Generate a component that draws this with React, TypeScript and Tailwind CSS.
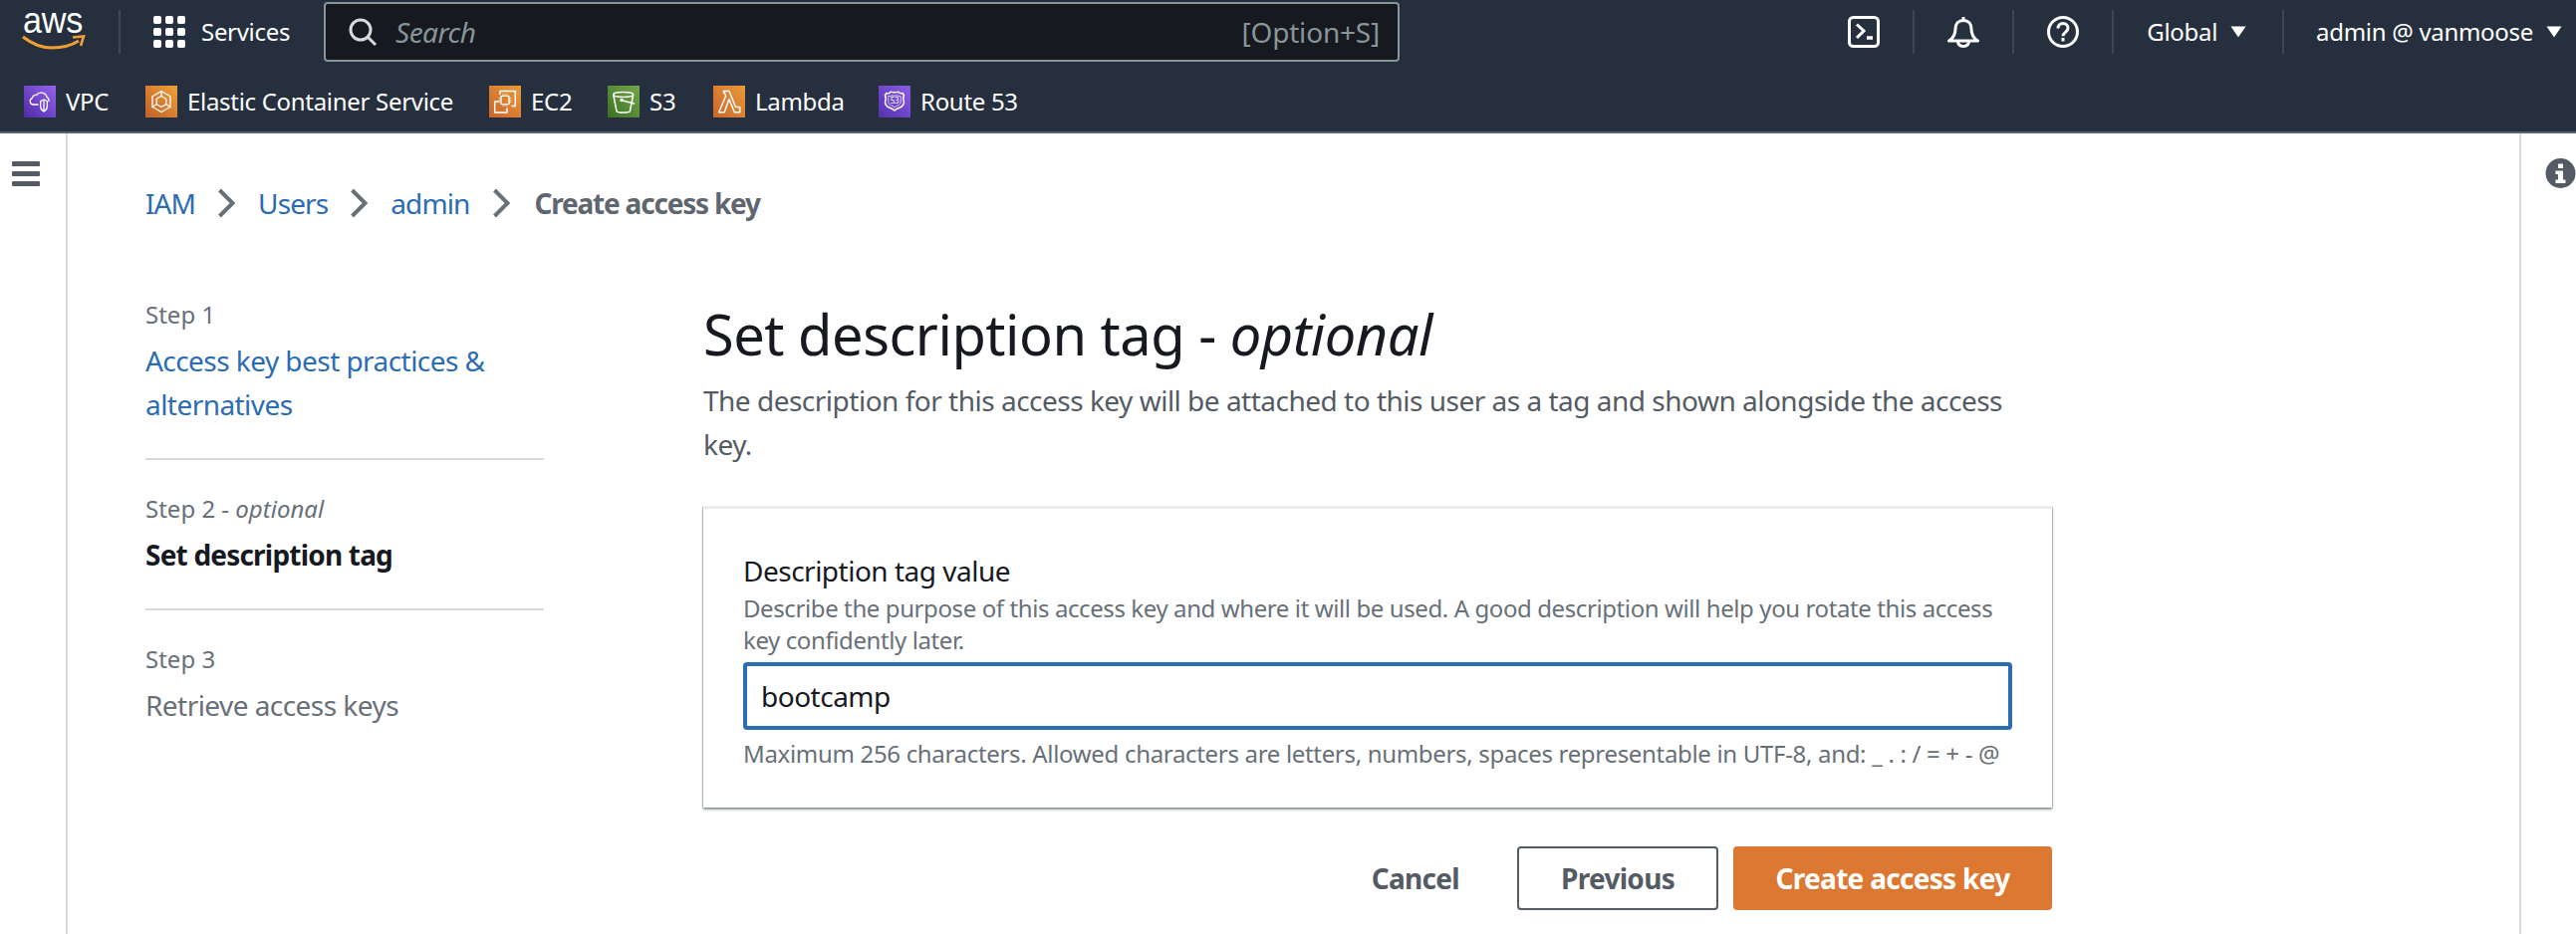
import React from "react";

const F = "[font-family:'Noto_Sans',sans-serif]";

function Tile({ from, to, id, children }: { from: string; to: string; id: string; children: React.ReactNode }) {
  return (
    <svg width="32" height="32" viewBox="0 0 32 32" className="shrink-0">
      <defs>
        <linearGradient id={id} x1="0" y1="1" x2="1" y2="0">
          <stop offset="0" stopColor={from} />
          <stop offset="1" stopColor={to} />
        </linearGradient>
      </defs>
      <rect width="32" height="32" fill={`url(#${id})`} />
      <g fill="none" stroke="#fff" strokeWidth="1.3" strokeLinejoin="round" strokeLinecap="round">{children}</g>
    </svg>
  );
}

const VpcIcon = () => (
  <Tile id="g1" from="#4f2ba6" to="#9563ee">
    <path d="M14 19H9.500a3.400 3.400 0 0 1-1-6.600 3.300 3.300 0 0 1 3.900-2.900A6 6 0 0 1 23 11.500a4 4 0 0 1 2 4" />
    <path d="M16.700 15.500l3.300-1.500 3.300 1.500V21c0 2.500-1.500 4-3.300 5-1.800-1-3.300-2.500-3.300-5z" />
    <path d="M20 14.500V25.500" />
  </Tile>
);
const EcsIcon = () => (
  <Tile id="g2" from="#c2602a" to="#eda038">
    <path d="M16 5.500l9 5.200v10.600l-9 5.200-9-5.200V10.700z" />
    <path d="M16 10.500l4.800 2.700v5.600L16 21.500l-4.800-2.700v-5.600z" />
    <path d="M16 5.500v5M20.800 18.800l4.200 2.500M7 21.300l4.200-2.500" />
  </Tile>
);
const Ec2Icon = () => (
  <Tile id="g3" from="#c8652c" to="#eb9a38">
    <rect x="12" y="10.500" width="8" height="8" strokeWidth="1.200" />
    <path d="M14 8.500v2M16 8.500v2M18 8.500v2M14 18.500v2M16 18.500v2M18 18.500v2M10 12.500h2M10 14.500h2M10 16.500h2M20 12.500h2M20 14.500h2M20 16.500h2" strokeWidth=".8" />
    <path d="M11 8.500V5.500H26.300V20.500H23" strokeWidth="1.500" />
    <path d="M9.500 16H5.700V27H18V23" strokeWidth="1.500" />
  </Tile>
);
const S3Icon = () => (
  <Tile id="g4" from="#3c7022" to="#72a84a">
    <path d="M5.700 9c0-1.400 4.500-2.400 10-2.400s10 1 10 2.400-4.500 2.400-10 2.400-10-1-10-2.400z" strokeWidth="1.500" />
    <path d="M5.700 9l3.300 16.500c.3 1 3 1.500 6.700 1.500s6.400-.5 6.700-1.500l3.300-16.500" strokeWidth="1.500" />
    <circle cx="14" cy="14.500" r="1" />
    <path d="M15 15l11.500 3" strokeWidth="1.500" />
  </Tile>
);
const LambdaIcon = () => (
  <Tile id="g5" from="#c8652c" to="#eb9a38">
    <path d="M10.500 5.500h5.500l6.500 16h4.200v5.200h-5.300l-5.500-13-4.700 13H5.700l7-16.500-1.300-3h-.9z" strokeWidth="1.500" />
  </Tile>
);
const Route53Icon = () => (
  <Tile id="g6" from="#5430aa" to="#8c5de6">
    <path d="M8 7.500c2 .8 3.200.3 4.300-1.300 1.600.8 5.800.8 7.400 0 1.100 1.600 2.300 2.100 4.300 1.300l1.600 2.200c-1.200 1.600-1.200 3-.4 5 1 2.800-.4 6.600-5 7.800-1.600.5-3.100 1.400-4.200 2.500-1.100-1.100-2.600-2-4.200-2.500-4.600-1.200-6-5-5-7.800.8-2 .8-3.400-.4-5z" strokeWidth="1.500" />
    <path d="M10 10.500c1.500.3 2.300 0 3-.8 1.500.5 4.500.5 6 0 .7.8 1.500 1.100 3 .8.600 1.500.4 3 .2 4.500.5 2.500-.8 4.500-3.700 5.300-1 .3-1.800.8-2.500 1.300-.7-.5-1.500-1-2.500-1.300-2.900-.8-4.200-2.800-3.700-5.300-.2-1.500-.4-3 .2-4.500z" strokeWidth=".7" />
    <text x="16" y="18" textAnchor="middle" fontSize="8" fill="#fff" stroke="none" fontFamily="'Noto Sans',sans-serif">53</text>
  </Tile>
);

const shortcuts = [
  { name: "VPC", icon: <VpcIcon />, w: "w-[122px]" },
  { name: "Elastic Container Service", icon: <EcsIcon />, w: "w-[345px]" },
  { name: "EC2", icon: <Ec2Icon />, w: "w-[119px]" },
  { name: "S3", icon: <S3Icon />, w: "w-[106px]" },
  { name: "Lambda", icon: <LambdaIcon />, w: "w-[166px]" },
  { name: "Route 53", icon: <Route53Icon />, w: "w-[140px]" },
];

const Divider = () => <div className="w-[2px] h-[44px] bg-[#3c4654] shrink-0" />;

const Caret = () => (
  <svg width="16" height="12" viewBox="0 0 16 12" className="block shrink-0">
    <path d="M0.500 0.500h15L8 11.500z" fill="#fff" />
  </svg>
);

const Chevron = () => (
  <svg width="19" height="30" viewBox="0 0 19 30" className="block shrink-0">
    <path d="M2.500 2l13 13-13 13" fill="none" stroke="#687078" strokeWidth="4" />
  </svg>
);

function Header() {
  return (
    <header className="bg-[#252f3e] border-b-2 border-[#596370] h-[134px] flex flex-col text-white text-[24px] tracking-[-0.3px]">
      <div className="h-[64px] flex items-center">
        <div className="w-[119px] pl-[22px] shrink-0">
          <svg width="63" height="64" viewBox="0 0 63 64" className="block overflow-visible">
            <text x="1" y="33" fontSize="36" fill="#fff" fontFamily="'Liberation Sans',sans-serif" textLength="60" lengthAdjust="spacingAndGlyphs">aws</text>
            <path d="M1 37c9 7 19 11 29 11 11 0 20-2.500 27-7" fill="none" stroke="#f0a033" strokeWidth="3" />
            <path d="M51 37.500l11-1-3 9.500" fill="none" stroke="#f0a033" strokeWidth="2.600" />
          </svg>
        </div>
        <Divider />
        <svg width="32" height="32" viewBox="0 0 32 32" fill="#fff" className="ml-[33px] shrink-0">
          {[0, 12, 24].map((y) =>
            [0, 12, 24].map((x) => <rect key={`${x}-${y}`} x={x} y={y} width="8" height="8" rx="2" />)
          )}
        </svg>
        <span className="ml-[16px] w-[123px] shrink-0">Services</span>
        <div className="w-[1080px] h-[60px] bg-[#16191f] border-2 border-[#879596] rounded-[4px] flex items-center pl-[22px] pr-[18px] shrink-0 text-[28px] tracking-[-0.5px]">
          <svg width="30" height="30" viewBox="0 0 30 30" className="shrink-0" fill="none" stroke="#d5dbdb" strokeWidth="3">
            <circle cx="13" cy="13" r="10" />
            <path d="M20 20l8 8" />
          </svg>
          <span className="ml-[18px] italic text-[#879596] grow">Search</span>
          <span className="text-[#879596] tracking-[-0.2px]">[Option+S]</span>
        </div>
        <div className="ml-auto flex items-center">
          <svg width="32" height="32" viewBox="0 0 32 32" fill="none" stroke="#fff" strokeWidth="3" className="mr-[33px] shrink-0">
            <rect x="1.500" y="1.500" width="29" height="29" rx="4" />
            <path d="M9 8.500l7 6.500-7 7" />
            <path d="M19 22h6" strokeWidth="3.500" />
          </svg>
          <Divider />
          <svg width="32" height="32" viewBox="0 0 32 32" fill="none" stroke="#fff" strokeWidth="3" className="mx-[33px] shrink-0">
            <path d="M16 1v3" />
            <path d="M1.500 25c5-3 6.500-7 6.500-12 0-5 3-8.500 8-8.500s8 3.500 8 8.500c0 5 1.500 9 6.500 12z" strokeLinejoin="round" />
            <path d="M10.500 25c0 4 2 5.500 5.500 5.500s5.500-1.500 5.500-5.500" />
          </svg>
          <Divider />
          <svg width="32" height="32" viewBox="0 0 32 32" fill="none" stroke="#fff" strokeWidth="3" className="mx-[33px] shrink-0">
            <circle cx="16" cy="16" r="14.500" />
            <path d="M11 12.500c0-3 2.200-5 5-5s5 2 5 4.800c0 4-5 4-5 8" />
            <path d="M16 22v3.500" />
          </svg>
          <Divider />
          <span className="ml-[33px]">Global</span>
          <span className="ml-[13px] mr-[36px]"><Caret /></span>
          <Divider />
          <span className="ml-[32px]">admin @ vanmoose</span>
          <span className="ml-[13px] mr-[14px]"><Caret /></span>
        </div>
      </div>
      <div className="flex items-center h-[24px] mt-[26px] pl-[24px]">
        {shortcuts.map((s) => (
          <div key={s.name} className={`flex items-center gap-[10px] shrink-0 ${s.w}`}>
            {s.icon}
            <span className="whitespace-nowrap">{s.name}</span>
          </div>
        ))}
      </div>
    </header>
  );
}

function Step({ label, children }: { label: React.ReactNode; children: React.ReactNode }) {
  return (
    <div>
      <div className="text-[24px] leading-[34px] text-[#687078]">{label}</div>
      <div className="mt-[7px] text-[28px] leading-[44px] tracking-[-0.55px]">{children}</div>
    </div>
  );
}

export default function App() {
  return (
    <div className={`${F} w-[2586px] h-[938px] overflow-hidden bg-white text-[#16191f]`}>
      <Header />
      <div className="flex h-[804px]">
        <aside className="w-[68px] shrink-0 border-r-2 border-[#d5dbdb] pl-[12px] pt-[28px]">
          <div className="w-[28px] flex flex-col gap-[5px]">
            <div className="h-[5px] bg-[#545b64] rounded-[1px]" />
            <div className="h-[5px] bg-[#545b64] rounded-[1px]" />
            <div className="h-[5px] bg-[#545b64] rounded-[1px]" />
          </div>
        </aside>
        <main className="grow pl-[78px]">
          <nav className="flex items-center h-[44px] mt-[48px] text-[28px] text-[#2b6cb3] tracking-[-0.9px]">
            <span>IAM</span>
            <span className="mx-[22px]"><Chevron /></span>
            <span>Users</span>
            <span className="mx-[22px]"><Chevron /></span>
            <span>admin</span>
            <span className="mx-[23px]"><Chevron /></span>
            <span className="font-bold text-[#5f6670] tracking-[-1.2px]">Create access key</span>
          </nav>
          <div className="flex mt-[73px]">
            <div className="w-[400px] shrink-0">
              <Step label="Step 1">
                <span className="text-[#2b6cb3]">Access key best practices &amp; alternatives</span>
              </Step>
              <div className="h-[2px] bg-[#d5dbdb] my-[32px]" />
              <Step label={<>Step 2 - <i>optional</i></>}>
                <b className="tracking-[-0.8px]">Set description tag</b>
              </Step>
              <div className="h-[2px] bg-[#d5dbdb] my-[32px]" />
              <Step label="Step 3">
                <span className="text-[#687078]">Retrieve access keys</span>
              </Step>
            </div>
            <div className="ml-[160px] w-[1354px] shrink-0">
              <h1 className="text-[56px] leading-[72px] tracking-[-0.5px]">
                Set description tag - <i>optional</i>
              </h1>
              <p className="text-[28px] leading-[44px] text-[#545b64] mt-[9px] tracking-[-0.5px] max-w-[1320px]">
                The description for this access key will be attached to this user as a tag and shown alongside the access key.
              </p>
              <section className="mt-[41px] bg-white border-t-2 border-[#eaeded] shadow-[0_2px_2px_rgba(0,28,36,0.45),1px_0_1px_rgba(0,28,36,0.2),-1px_0_1px_rgba(0,28,36,0.2)] h-[302px] px-[40px] pt-[44px]">
                <div className="text-[28px] leading-[36px] tracking-[-0.5px]">Description tag value</div>
                <div className="text-[24px] leading-[32px] text-[#687078] mt-[4px] tracking-[-0.4px]">
                  Describe the purpose of this access key and where it will be used. A good description will help you rotate this access key confidently later.
                </div>
                <div className="h-[68px] mt-[6px] border-4 border-[#2b6cb3] rounded-[4px] flex items-center pl-[14px] text-[28px] tracking-[-0.5px]">
                  bootcamp
                </div>
                <div className="text-[24px] leading-[32px] text-[#687078] mt-[8px] tracking-[-0.32px] whitespace-nowrap">
                  Maximum 256 characters. Allowed characters are letters, numbers, spaces representable in UTF-8, and: _ . : / = + - @
                </div>
              </section>
              <div className="flex items-center justify-end mt-[39px] text-[28px] font-bold tracking-[-0.7px]">
                <span className="text-[#545b64] mr-[58px]">Cancel</span>
                <div className="w-[202px] h-[64px] border-2 border-[#545b64] rounded-[4px] text-[#545b64] flex items-center justify-center">Previous</div>
                <div className="w-[320px] h-[64px] ml-[15px] bg-[#dd7833] rounded-[4px] text-white flex items-center justify-center">Create access key</div>
              </div>
            </div>
          </div>
        </main>
        <aside className="w-[57px] shrink-0 border-l-2 border-[#d5dbdb] pl-[24px] pt-[25px]">
          <svg width="31" height="30" viewBox="0 0 31 30">
            <circle cx="15.500" cy="15" r="15" fill="#545b64" />
            <path d="M13 5.500h5v4.500h-5zM10.500 12.500H18v9h2.500v3.500h-10v-3.500H13v-5.500h-2.500z" fill="#fff" />
          </svg>
        </aside>
      </div>
    </div>
  );
}
